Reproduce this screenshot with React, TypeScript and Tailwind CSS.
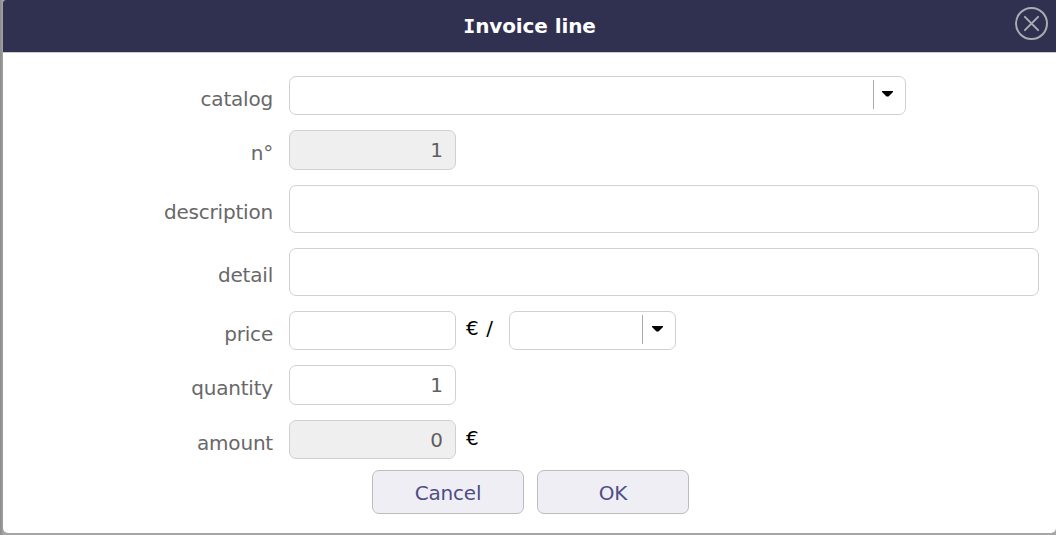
import type { ReactNode } from 'react';

const field = 'box-border rounded-[7px] border border-[#d0d0d0]';

function Row({ label, height, labelTop = 'pt-[11px]', children }: {
  label: string;
  height: string;
  labelTop?: string;
  children: ReactNode;
}) {
  return (
    <div className={`flex ${height}`}>
      <label className={`mr-4 w-[270px] shrink-0 text-right tracking-[-0.2px] text-[#686868] ${labelTop}`}>{label}</label>
      {children}
    </div>
  );
}

function NumberField({ value = '', disabled = false }: { value?: string; disabled?: boolean }) {
  return (
    <div className={`${field} w-[167px] pt-[7px] pr-3 text-right text-[#606060] ${disabled ? 'bg-[#efefef]' : 'bg-white'}`}>
      {value}
    </div>
  );
}

function Select({ width, toggle, arrow }: { width: string; toggle: string; arrow: string }) {
  return (
    <div className={`${field} ${width} flex justify-end bg-white`}>
      <div className={`mt-[3px] flex h-[29px] border-l border-[#aaa] pt-[11px] ${toggle} ${arrow}`}>
        <svg width="11" height="6" viewBox="0 0 11 6">
          <path d="M0 0h11v1L6.5 5.6h-2L0 1z" fill="#000" />
        </svg>
      </div>
    </div>
  );
}

function TextField() {
  return <div className={`${field} w-[750px] bg-white`} />;
}

const button =
  'h-11 w-[152px] rounded-[7px] border border-[#bcbcbc] bg-[#efeef5] pt-px text-center tracking-[-0.2px] text-[#4e4d86]';

export default function App() {
  return (
    <div className="h-[535px] w-[1056px] overflow-hidden bg-[#a3a3a3] bg-[linear-gradient(90deg,#8c8c8c_0,#999_2px,#a6a6a6_3px)] pl-[3px] font-['DejaVu_Sans',Verdana,sans-serif] text-[20px] leading-6">
      <div className="flex h-[533px] w-[1053px] flex-col overflow-hidden rounded-tl-[3px] rounded-b-[5px] bg-white">
        <header className="relative h-[53px] shrink-0 border-b border-[#ccc] bg-[#303050] pt-[14px] text-center font-bold text-white">
          <h1 className="text-[20px] leading-6 tracking-[-0.1px]">
            <span className="font-['DejaVu_Sans_Mono',monospace]">I</span>nvoice line
          </h1>
          <button aria-label="Close" className="absolute top-[7px] right-2">
            <svg width="33" height="33" viewBox="0 0 33 33" fill="none" stroke="#a8adb0" strokeWidth="2">
              <circle cx="16.5" cy="16.5" r="15.5" />
              <path d="M9.9 9.9l13.2 13.2M23.1 9.9L9.9 23.1" strokeLinecap="round" />
            </svg>
          </button>
        </header>
        <div className="flex flex-col gap-[15px] pt-[23px]">
          <Row label="catalog" height="h-[39px]"><Select width="w-[617px]" toggle="w-8" arrow="pl-[8px]" /></Row>
          <Row label="n°" height="h-10"><NumberField value="1" disabled /></Row>
          <Row label="description" height="h-12" labelTop="pt-[15px]"><TextField /></Row>
          <Row label="detail" height="h-12" labelTop="pt-[15px]"><TextField /></Row>
          <Row label="price" height="h-[39px]">
            <NumberField />
            <span className="w-[53px] pt-[5px] pl-[10px] tracking-[0.6px] text-black">€ /</span>
            <Select width="w-[167px]" toggle="w-[33px]" arrow="pl-[9px]" />
          </Row>
          <Row label="quantity" height="h-10"><NumberField value="1" /></Row>
          <Row label="amount" height="h-[39px]">
            <NumberField value="0" disabled />
            <span className="pt-1.5 pl-[10px] text-black">€</span>
          </Row>
        </div>
        <div className="mt-[11px] flex gap-[13px] pl-[369px]">
          <button className={button}>Cancel</button>
          <button className={button}>OK</button>
        </div>
      </div>
    </div>
  );
}
